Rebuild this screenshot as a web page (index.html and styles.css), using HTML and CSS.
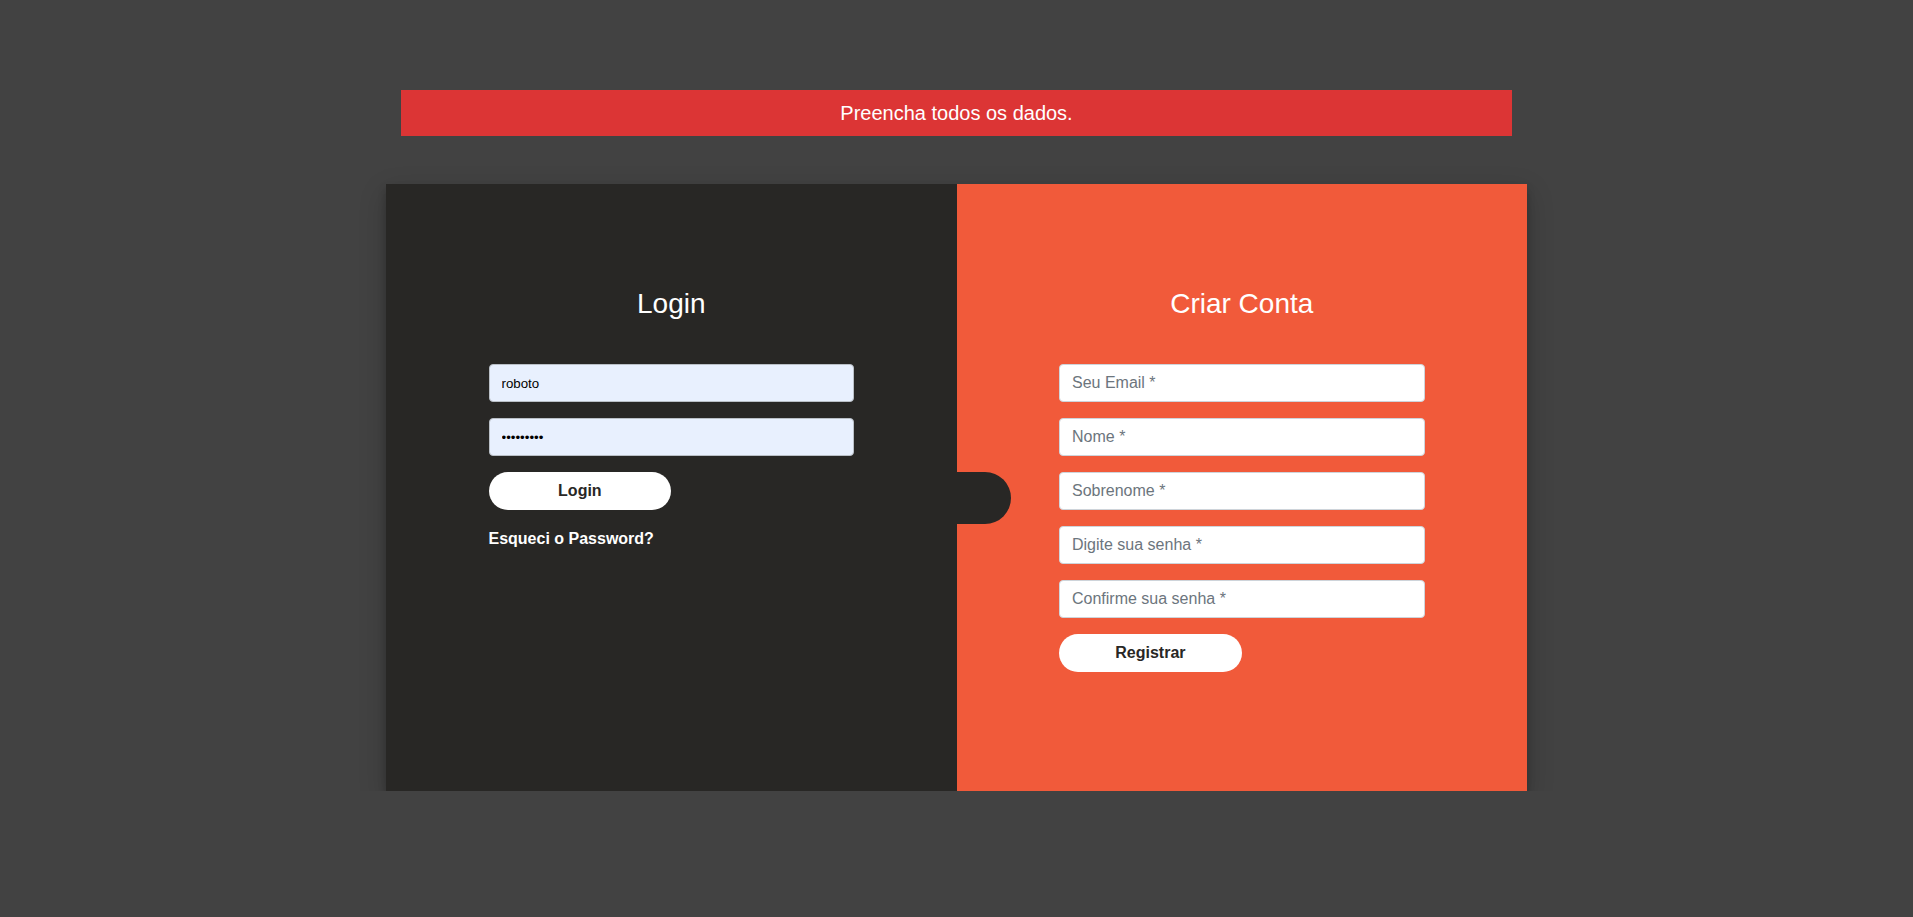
FILE: index.html
```html
<!DOCTYPE html>
<html lang="pt">
<head>
<meta charset="utf-8">
<title>Login</title>
<link rel="stylesheet" href="styles.css">
</head>
<body>
<div class="page">
  <div class="alert">Preencha todos os dados.</div>
  <div class="card">
    <div class="panel panel-login">
      <form class="form">
        <h3 class="title">Login</h3>
        <div class="group"><input class="field field-filled" type="text" value="roboto"></div>
        <div class="group"><input class="field field-filled" type="password" value="123456789"></div>
        <div class="group"><button class="btn" type="button">Login</button></div>
        <div class="group group-link"><a class="forgot" href="#">Esqueci o Password?</a></div>
      </form>
      <span class="tab"></span>
    </div>
    <div class="panel panel-register">
      <form class="form">
        <h3 class="title">Criar Conta</h3>
        <div class="group"><input class="field" type="text" placeholder="Seu Email *"></div>
        <div class="group"><input class="field" type="text" placeholder="Nome *"></div>
        <div class="group"><input class="field" type="text" placeholder="Sobrenome *"></div>
        <div class="group"><input class="field" type="password" placeholder="Digite sua senha *"></div>
        <div class="group"><input class="field" type="password" placeholder="Confirme sua senha *"></div>
        <div class="group"><button class="btn" type="button">Registrar</button></div>
      </form>
    </div>
  </div>
</div>
</body>
</html>
```

FILE: styles.css
```css
* { box-sizing: border-box; }

html, body {
  margin: 0;
  padding: 0;
}

body {
  background: #424242;
  font-family: "Liberation Sans", Arial, sans-serif;
  font-size: 16px;
  line-height: 1.5;
  color: #212529;
}

.page {
  width: 1141px;
  margin: 90px auto 0;
}

.alert {
  margin: 0 15px 48px;
  height: 46px;
  padding: 10px 20px;
  background: #dc3535;
  color: #ffffff;
  font-size: 20px;
  line-height: 26px;
  text-align: center;
}

.card {
  display: flex;
  box-shadow: 0 5px 8px 0 rgba(0, 0, 0, 0.2), 0 9px 26px 0 rgba(0, 0, 0, 0.19);
}

.panel {
  flex: 1 1 0;
  padding: 57px;
}

.panel-login {
  position: relative;
  background: #282725;
}

.panel-register {
  background: #f15a3a;
}

.form {
  padding: 45.5px;
}

.title {
  margin: 0 0 44px;
  font-size: 28px;
  font-weight: 500;
  line-height: 1.2;
  color: #ffffff;
  text-align: center;
}

.group {
  margin-bottom: 16px;
}

.group-link {
  padding-top: 1px;
}

.field {
  display: block;
  width: 100%;
  height: 38px;
  padding: 6px 12px;
  border: 1px solid #ced4da;
  border-radius: 4px;
  background: #ffffff;
  font-family: "Liberation Sans", Arial, sans-serif;
  font-size: 16px;
  line-height: 1.5;
  color: #495057;
  outline: none;
}

.field::placeholder {
  color: #6c757d;
  opacity: 1;
}

.field-filled {
  background: #e8f0fe;
  border-color: #b9bfc6;
  font-size: 13.3px;
  color: #000000;
}

.btn {
  display: block;
  width: 50%;
  height: 38px;
  padding: 6px 12px;
  border: none;
  border-radius: 19px;
  background: #ffffff;
  font-family: "Liberation Sans", Arial, sans-serif;
  font-size: 16px;
  font-weight: 700;
  line-height: 1.5;
  color: #282725;
  text-align: center;
  cursor: pointer;
}

.forgot {
  color: #ffffff;
  font-weight: 700;
  text-decoration: none;
}

.tab {
  position: absolute;
  z-index: 1;
  top: 288px;
  left: 100%;
  width: 54px;
  height: 52px;
  background: #282725;
  border-radius: 0 26px 26px 0;
}
```
